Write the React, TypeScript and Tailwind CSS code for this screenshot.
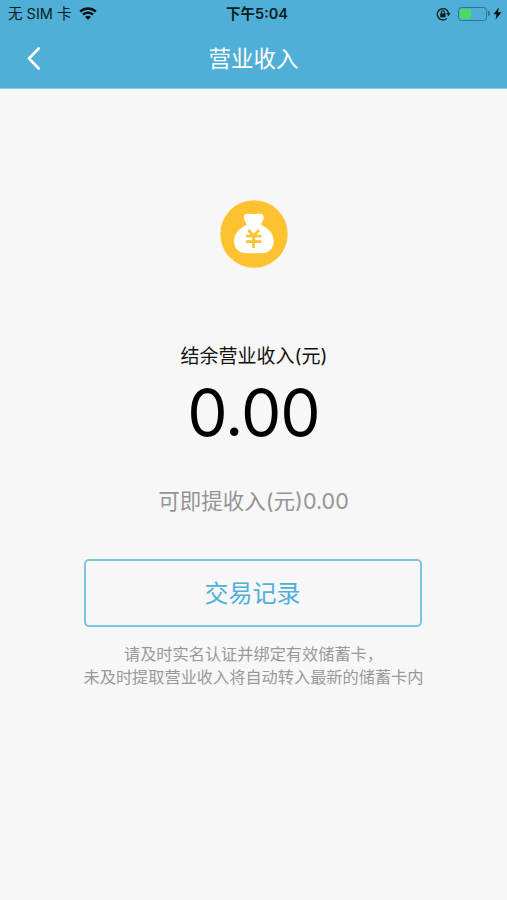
import React from "react";

function StatusBar() {
  return (
    <div className="relative flex h-[28px] items-center justify-between pl-[8px] pr-[5px] text-[#0b1c24]">
      <div className="flex items-center gap-[8px]">
        <span className="whitespace-nowrap text-[14.5px] leading-[28px]">
          无 SIM 卡
        </span>
        <svg
          className="mb-[2px]"
          width="18"
          height="13"
          viewBox="0 0 18 13"
          fill="none"
        >
          <path
            d="M1.2 4.6C5.6.5 12.4.5 16.8 4.6"
            stroke="#050d11"
            strokeWidth="2.4"
          />
          <path
            d="M4 7.7c2.9-2.6 7.1-2.6 10 0"
            stroke="#050d11"
            strokeWidth="2.3"
          />
          <path d="M9 12.8 6 9.9c1.7-1.5 4.3-1.5 6 0z" fill="#050d11" />
        </svg>
      </div>
      <div className="absolute inset-x-0 pl-[7px] text-center text-[14.5px] font-semibold leading-[28px]">
        下午5:04
      </div>
      <div className="flex items-center pb-px">
        <svg width="15" height="14" viewBox="0 0 15 14" fill="none">
          <path
            d="M10.9 11.4A5.7 5.7 0 1 1 12.5 6"
            stroke="#0b1c24"
            strokeWidth="1.3"
          />
          <path d="M10.2 6h4.4l-2.2 3.2z" fill="#0b1c24" />
          <rect x="4.2" y="6.2" width="5.4" height="4" rx=".5" fill="#0b1c24" />
          <path
            d="M5.3 6.5V5.3a1.6 1.6 0 0 1 3.2 0v1.2"
            stroke="#0b1c24"
            strokeWidth="1.1"
          />
        </svg>
        <div className="ml-[7px] h-[14px] w-[29px] rounded-[3.5px] border border-[#35738e] p-px">
          <div className="h-full w-[11px] rounded-[1.5px] bg-[#4cd964]"></div>
        </div>
        <div className="ml-px h-[5px] w-[2px] rounded-r-full bg-[#35738e]"></div>
        <svg className="ml-[3px]" width="9" height="13" viewBox="0 0 9 13">
          <path d="M5.8.5.5 7.2h3L2.6 12.5 8.5 5.3H5z" fill="#050d11" />
        </svg>
      </div>
    </div>
  );
}

function MoneyBag() {
  return (
    <svg width="68" height="68" viewBox="0 0 68 68" fill="none">
      <circle cx="34" cy="34" r="33.7" fill="#fec12f" />
      <path
        d="M26.5 24.8C26.3 22 23.8 20.5 23.8 17.4c0-2.500 1.600-3.600 4-3.600 2.200 0 3.700.2 6 .2s3.800-.2 6-.2c2.400 0 4 1.100 4 3.600 0 3.100-2.500 4.600-2.700 7.400C48.300 28.300 53.700 33.500 53.700 41c0 8-5 12.200-12.500 12.200H27C19.500 53.200 14 49 14 41c0-7.500 5.700-12.700 12.500-16.200z"
        fill="#fff"
      />
      <path
        d="m28.300 30 5.400 5.700 5.400-5.700M26 36.200h15.400M26 41.700h15.400M33.700 35.200v12.800"
        stroke="#fec12f"
        strokeWidth="2.7"
      />
    </svg>
  );
}

function App() {
  return (
    <div className="flex min-h-[900px] w-full flex-col bg-[#f7f7f7] font-['Inter','Noto_Sans_CJK_SC',sans-serif]">
      <header className="h-[89px] border-b border-[#8cc8df] bg-[#50afd7]">
        <StatusBar />
        <div className="relative flex h-[60px] items-center justify-center">
          <button className="absolute left-[27px] top-[19px]" aria-label="返回">
            <svg width="14" height="23" viewBox="0 0 14 23" fill="none">
              <path
                d="M11.7 1.5 2 11.5l9.7 10"
                stroke="#fff"
                strokeWidth="2.6"
                strokeLinecap="round"
                strokeLinejoin="round"
              />
            </svg>
          </button>
          <h1 className="pt-px text-[22.5px] leading-[32px] text-white">
            营业收入
          </h1>
        </div>
      </header>
      <main className="flex flex-col items-center">
        <div className="mt-[111px]">
          <MoneyBag />
        </div>
        <p className="mt-[75px] pl-px text-[19px] leading-[28px] text-[#111]">
          结余营业收入(元)
        </p>
        <div className="mt-[10px] text-[64px] leading-[64px] tracking-[-1px] text-black">
          0.00
        </div>
        <p className="mt-[40px] text-[21.5px] leading-[32px] text-[#949494]">
          可即提收入(元)0.00
        </p>
        <button className="mr-[2px] mt-[42px] h-[68px] w-[338px] rounded-[5px] border-2 border-[#7fc3e0] pt-px text-[24px] text-[#50afd7]">
          交易记录
        </button>
        <div className="mt-[16px] text-center text-[16.2px] leading-[23px] text-[#999]">
          <p>请及时实名认证并绑定有效储蓄卡，</p>
          <p className="whitespace-nowrap">
            未及时提取营业收入将自动转入最新的储蓄卡内
          </p>
        </div>
      </main>
    </div>
  );
}

export default App;
